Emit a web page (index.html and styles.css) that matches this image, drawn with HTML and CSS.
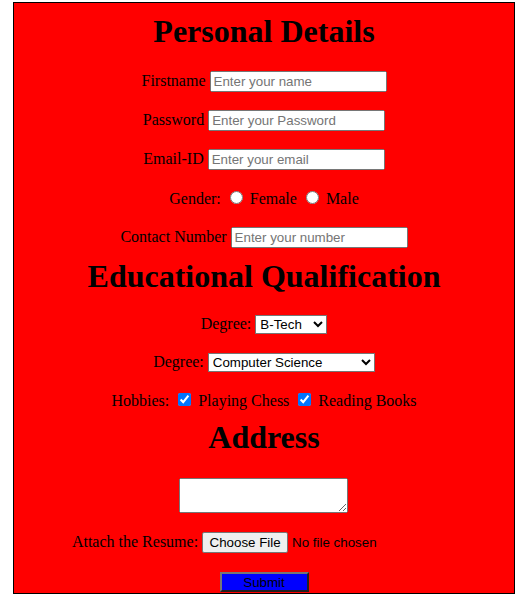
FILE: index.html
```html
<!DOCTYPE html>
<html>
<head>
<meta charset="utf-8">
<title>Form</title>
<link rel="stylesheet" href="styles.css">
</head>
<body>
<form class="card">
  <h1 class="title first">Personal Details</h1>
  <div class="row r1">Firstname <input class="txt" type="text" placeholder="Enter your name"></div>
  <div class="row">Password <input class="txt" type="password" placeholder="Enter your Password"></div>
  <div class="row">Email-ID <input class="txt" type="email" placeholder="Enter your email"></div>
  <div class="row">Gender: <input class="radio" type="radio" name="g"> Female <input class="radio" type="radio" name="g"> Male</div>
  <div class="row">Contact Number <input class="txt" type="text" placeholder="Enter your number"></div>
  <h1 class="title edu">Educational Qualification</h1>
  <div class="row d1">Degree: <select class="sel sel-short"><option>B-Tech</option><option>M-Tech</option></select></div>
  <div class="row d2">Degree: <select class="sel sel-long"><option>Computer Science</option><option>Electronics</option></select></div>
  <div class="row hob">Hobbies: <input class="check" type="checkbox" checked> Playing Chess <input class="check" type="checkbox" checked> Reading Books</div>
  <h1 class="title addr">Address</h1>
  <div class="area-row"><textarea class="area"></textarea></div>
  <div class="row attach">Attach the Resume: <input class="file" type="file"></div>
  <div class="submit-row"><input class="submit" type="submit" value="Submit"></div>
</form>
</body>
</html>
```
FILE: styles.css
```css
html, body {
  margin: 0;
  padding: 0;
  background: #fff;
}
body {
  padding: 2px 0 0 13px;
}
.card {
  width: 500px;
  border: 1px solid #000;
  background: #ff0000;
  text-align: center;
  font-family: "Liberation Serif", "Times New Roman", serif;
  font-size: 16px;
  color: #000;
  padding-bottom: 1px;
}
.title {
  font-size: 32px;
  font-weight: bold;
  line-height: 37px;
  height: 37px;
  margin: 0;
}
.first { margin-top: 10px; }
.edu { margin-top: 10px; }
.addr { margin-top: 8px; }
.row {
  height: 21px;
  margin-top: 18px;
  white-space: nowrap;
}
.r1 { margin-top: 21px; }
.d1 { margin-top: 20px; }
.d2 { margin-top: 17px; }
.hob { margin-top: 16px; }
.attach { margin-top: 19px; }
.txt {
  font: 13.33px "Liberation Sans", Arial, sans-serif;
  width: 177px;
  height: 21px;
  box-sizing: border-box;
  padding: 1px 2px;
  margin: 0;
  vertical-align: baseline;
}
.txt::placeholder { color: #757575; }
.radio, .check {
  width: 13px;
  height: 13px;
  margin: 3px 3px 0 5px;
  accent-color: #0075ff;
}
.sel {
  font: 13.33px "Liberation Sans", Arial, sans-serif;
  height: 19px;
  box-sizing: border-box;
  margin: 0;
  padding: 0;
  background: #fff;
  color: #000;
}
.sel-short { width: 72px; }
.sel-long { width: 167px; }
.area-row {
  margin-top: 22px;
  height: 35px;
  display: flex;
  justify-content: center;
}
.area {
  width: 169px;
  height: 35px;
  box-sizing: border-box;
  margin: 0 1px 0 0;
  resize: both;
}
.file {
  font: 13.33px "Liberation Sans", Arial, sans-serif;
  width: 254px;
  margin: 0;
  text-align: left;
  color: #000;
}
.file::file-selector-button {
  font: 13.33px "Liberation Sans", Arial, sans-serif;
  width: 86px;
  height: 21px;
  margin: 0 4px 0 0;
  padding: 1px 6px;
  background: #efefef;
  border: 1px solid #767676;
  border-radius: 2px;
  color: #000;
}
.submit-row {
  margin-top: 19px;
  height: 20px;
  display: flex;
  justify-content: center;
}
.submit {
  font: 13.33px "Liberation Sans", Arial, sans-serif;
  width: 89px;
  height: 20px;
  margin: 0;
  padding: 0;
  background: #0000ff;
  color: #000;
  border: 2px outset #767676;
}
```
